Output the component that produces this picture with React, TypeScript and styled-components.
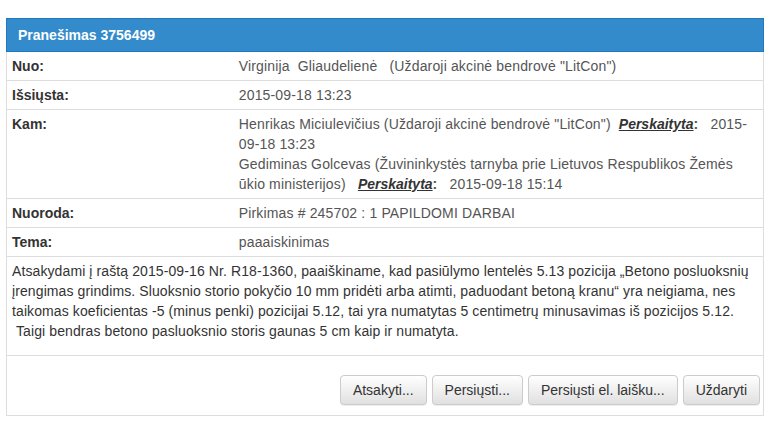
import React from 'react';
import styled, { createGlobalStyle } from 'styled-components';

const GlobalStyle = createGlobalStyle`
  html, body {
    margin: 0;
    padding: 0;
    background: #fff;
  }
  body {
    font-family: "Liberation Sans", Arial, sans-serif;
    font-size: 14px;
    line-height: 20px;
    color: #333;
  }
`;

type Field = {
    label: string;
    value: React.ReactNode;
};

const Read = ({ date, gap }: { date: string; gap: string }) => (
    <>
        {gap}
        <ReadMark>Perskaityta</ReadMark>
        <strong>:</strong>
        {'   '}
        {date}
    </>
);

const fields: Field[] = [
    {
        label: 'Nuo:',
        value: 'Virginija  Gliaudelienė   (Uždaroji akcinė bendrovė "LitCon")',
    },
    { label: 'Išsiųsta:', value: '2015-09-18 13:23' },
    {
        label: 'Kam:',
        value: (
            <>
                <div>
                    Henrikas Miciulevičius (Uždaroji akcinė bendrovė "LitCon")
                    <Read gap="  " date="2015-09-18 13:23" />
                </div>
                <div>
                    Gediminas Golcevas (Žuvininkystės tarnyba prie Lietuvos Respublikos Žemės
                    <br />
                    ūkio ministerijos)
                    <Read gap="   " date="2015-09-18 15:14" />
                </div>
            </>
        ),
    },
    { label: 'Nuoroda:', value: 'Pirkimas # 245702 : 1 PAPILDOMI DARBAI' },
    { label: 'Tema:', value: 'paaaiskinimas' },
];

const buttons = ['Atsakyti...', 'Persiųsti...', 'Persiųsti el. laišku...', 'Uždaryti'];

const App = () => {
    return (
        <>
            <GlobalStyle />
            <Panel>
                <Heading>Pranešimas 3756499</Heading>
                {fields.map((field) => (
                    <Row key={field.label}>
                        <Label>{field.label}</Label>
                        <Value>{field.value}</Value>
                    </Row>
                ))}
                <Body>
                    <p>
                        Atsakydami į raštą 2015-09-16 Nr. R18-1360, paaiškiname, kad pasiūlymo lentelės
                        5.13 pozicija „Betono posluoksnių įrengimas grindims. Sluoksnio storio pokyčio 10
                        mm pridėti arba atimti, paduodant betoną kranu“ yra neigiama, nes taikomas
                        koeficientas -5 (minus penki) pozicijai 5.12, tai yra numatytas 5 centimetrų
                        minusavimas iš pozicijos 5.12.
                        <br />
                        {' '}Taigi bendras betono pasluoksnio storis gaunas 5 cm kaip ir numatyta.
                    </p>
                </Body>
                <Footer>
                    {buttons.map((label) => (
                        <Button key={label} type="button">
                            {label}
                        </Button>
                    ))}
                </Footer>
            </Panel>
        </>
    );
};

export default App;

const Panel = styled.div`
    margin: 18px 12px 0 6px;
    border: 1px solid #ddd;
    border-top: 0;
    background: #fff;
`;

const Heading = styled.div`
    margin: 0 -1px;
    padding: 6px 11px;
    background-color: #338bcb;
    border: 1px solid #1f79c0;
    color: #fff;
    font-weight: bold;
    font-size: 14px;
    line-height: 20px;
`;

const Row = styled.div`
    display: grid;
    grid-template-columns: 30% 70%;
    border-bottom: 1px solid #ddd;
`;

const Label = styled.div`
    padding: 4px 5px;
    font-weight: bold;
    color: #333;
`;

const Value = styled.div`
    padding: 4px 2px 4px 5px;
    color: #555;
    letter-spacing: 0.15px;
    white-space: pre-wrap;
`;

const ReadMark = styled.strong`
    font-style: italic;
    text-decoration: underline;
    letter-spacing: 0;
    color: #333;
`;

const Body = styled.div`
    padding: 4px 2px 4px 5px;
    border-bottom: 1px solid #ddd;
    letter-spacing: 0.1px;
    white-space: pre-wrap;

    p {
        margin: 0 0 10px;
    }
`;

const Footer = styled.div`
    display: flex;
    justify-content: flex-end;
    gap: 5px;
    padding: 19px 3px 10px;
`;

const Button = styled.button`
    height: 30px;
    padding: 0 12px;
    font-family: "Liberation Sans", Arial, sans-serif;
    font-size: 14px;
    color: #333;
    background-image: linear-gradient(to bottom, #fff 0%, #e0e0e0 100%);
    border: 1px solid #ccc;
    border-radius: 4px;
    box-shadow: inset 0 1px 0 rgba(255, 255, 255, 0.15), 0 1px 1px rgba(0, 0, 0, 0.075);
    cursor: pointer;
`;
